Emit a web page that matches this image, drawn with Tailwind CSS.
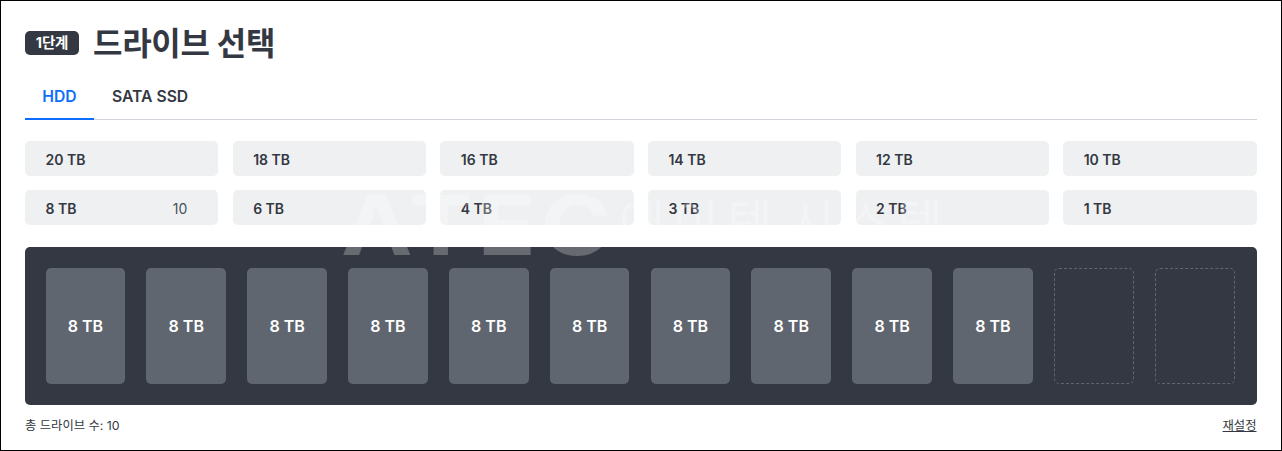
<!DOCTYPE html>
<html lang="ko">
<head>
<meta charset="utf-8">
<script src="https://cdn.jsdelivr.net/npm/@tailwindcss/browser@4"></script>
</head>
<body class="bg-white">
<div class="relative w-[1282px] h-[451px] overflow-hidden border border-black bg-white pl-6 pr-[24.5px] pt-[25px] font-['Inter','Noto_Sans_CJK_KR',sans-serif] text-[#343842]">
  <div class="flex items-center h-[34px]">
    <span class="flex items-center justify-center w-[54px] h-[24.5px] rounded-[5px] bg-[#343842] text-white text-[14.5px] font-bold tracking-[-0.2px]">1단계</span>
    <h1 class="ml-[14px] pt-[2px] text-[32px] font-bold leading-[34px] tracking-[-0.3px]">드라이브 선택</h1>
  </div>
  <div class="mt-[17px] flex h-[43px] border-b border-[#ced4da]">
    <div class="w-[69px] h-[43px] border-b-2 border-[#0d6efd] text-[#0d6efd] text-[15.7px] font-semibold flex items-center justify-center pb-[2px]">HDD</div>
    <div class="px-[18px] h-[42px] text-[15.7px] font-semibold flex items-center justify-center pb-[2px]">SATA SSD</div>
  </div>
  <div class="mt-[21px] grid grid-cols-6 gap-x-[14.3px] gap-y-[14px] text-[14px] font-semibold">
    <div class="h-[35px] rounded-[5px] bg-[#eff0f2] pl-[20.5px] pt-[1px] flex items-center">20 TB</div>
    <div class="h-[35px] rounded-[5px] bg-[#eff0f2] pl-[20.5px] pt-[1px] flex items-center">18 TB</div>
    <div class="h-[35px] rounded-[5px] bg-[#eff0f2] pl-[20.5px] pt-[1px] flex items-center">16 TB</div>
    <div class="h-[35px] rounded-[5px] bg-[#eff0f2] pl-[20.5px] pt-[1px] flex items-center">14 TB</div>
    <div class="h-[35px] rounded-[5px] bg-[#eff0f2] pl-[20.5px] pt-[1px] flex items-center">12 TB</div>
    <div class="h-[35px] rounded-[5px] bg-[#eff0f2] pl-[20.5px] pt-[1px] flex items-center">10 TB</div>
    <div class="h-[35px] rounded-[5px] bg-[#eff0f2] pl-[20.5px] pt-[1px] pr-[31px] flex items-center justify-between">8 TB<span class="font-normal text-[#495057]">10</span></div>
    <div class="h-[35px] rounded-[5px] bg-[#eff0f2] pl-[20.5px] pt-[1px] flex items-center">6 TB</div>
    <div class="h-[35px] rounded-[5px] bg-[#eff0f2] pl-[20.5px] pt-[1px] flex items-center">4 TB</div>
    <div class="h-[35px] rounded-[5px] bg-[#eff0f2] pl-[20.5px] pt-[1px] flex items-center">3 TB</div>
    <div class="h-[35px] rounded-[5px] bg-[#eff0f2] pl-[20.5px] pt-[1px] flex items-center">2 TB</div>
    <div class="h-[35px] rounded-[5px] bg-[#eff0f2] pl-[20.5px] pt-[1px] flex items-center">1 TB</div>
  </div>
  <div class="mt-[22px] h-[158px] rounded-[5px] bg-[#343842] pl-[20.6px] pr-[22px] py-[21px] grid grid-cols-12 gap-x-[21.2px] text-white text-[16px] font-semibold">
    <div class="rounded-[5px] bg-[#5f666f] flex items-center justify-center">8 TB</div>
    <div class="rounded-[5px] bg-[#5f666f] flex items-center justify-center">8 TB</div>
    <div class="rounded-[5px] bg-[#5f666f] flex items-center justify-center">8 TB</div>
    <div class="rounded-[5px] bg-[#5f666f] flex items-center justify-center">8 TB</div>
    <div class="rounded-[5px] bg-[#5f666f] flex items-center justify-center">8 TB</div>
    <div class="rounded-[5px] bg-[#5f666f] flex items-center justify-center">8 TB</div>
    <div class="rounded-[5px] bg-[#5f666f] flex items-center justify-center">8 TB</div>
    <div class="rounded-[5px] bg-[#5f666f] flex items-center justify-center">8 TB</div>
    <div class="rounded-[5px] bg-[#5f666f] flex items-center justify-center">8 TB</div>
    <div class="rounded-[5px] bg-[#5f666f] flex items-center justify-center">8 TB</div>
    <div class="rounded-[5px] border border-dashed border-[#5f666f]"></div>
    <div class="rounded-[5px] border border-dashed border-[#5f666f]"></div>
  </div>
  <div class="mt-[11px] flex justify-between items-center h-[18px] text-[12.3px] pt-[2px]">
    <span>총 드라이브 수: 10</span>
    <span class="underline">재설정</span>
  </div>
  <div class="absolute left-[340px] top-[175px] origin-left scale-x-[1.17] text-[82px] leading-[100px] font-bold text-white/25 tracking-[4px] pointer-events-none">ATEC</div>
  <div class="absolute left-[618px] top-[190px] text-[50px] leading-[64px] font-normal text-white/25 tracking-[8px] [word-spacing:-14px] pointer-events-none">에이텍 시스템</div>
</div>
</body>
</html>
